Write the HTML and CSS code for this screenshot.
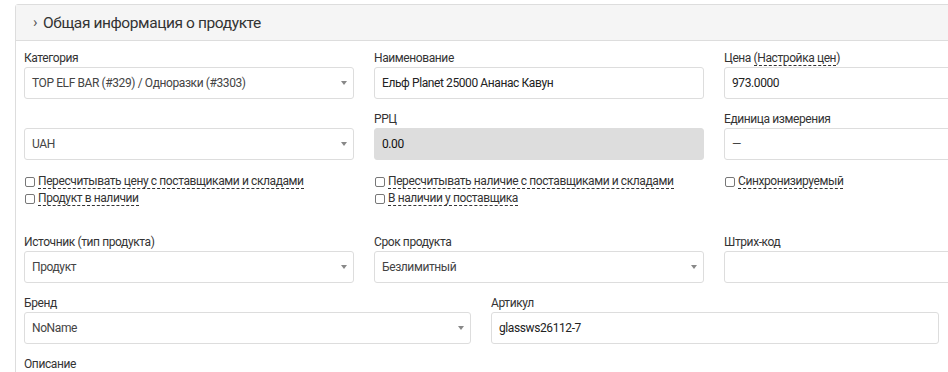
FILE: index.html
```html
<!DOCTYPE html>
<html lang="ru">
<head>
    <meta charset="UTF-8">
    <meta name="viewport" content="width=device-width, initial-scale=1.0">
    <title>Общая информация о продукте</title>
    <link rel="stylesheet" href="styles.css">
</head>
<body>
    <div class="panel">
        <div class="panel-heading">
            <span class="chevron">&rsaquo;</span>
            <span>Общая информация о продукте</span>
        </div>

        <div class="panel-body">
            <div class="row row-3">
                <div class="field">
                    <label>Категория</label>
                    <div class="control select">
                        <span>TOP ELF BAR (#329) / Одноразки (#3303)</span>
                        <b class="caret"></b>
                    </div>
                </div>
                <div class="field">
                    <label>Наименование</label>
                    <div class="control input">Ельф Planet 25000 Ананас Кавун</div>
                </div>
                <div class="field">
                    <label>Цена <span class="hint">(Настройка цен</span>)</label>
                    <div class="control input">973.0000</div>
                </div>
            </div>

            <div class="row row-3">
                <div class="field">
                    <label>&nbsp;</label>
                    <div class="control select">
                        <span>UAH</span>
                        <b class="caret"></b>
                    </div>
                </div>
                <div class="field">
                    <label>РРЦ</label>
                    <div class="control input disabled">0.00</div>
                </div>
                <div class="field">
                    <label>Единица измерения</label>
                    <div class="control select">
                        <span>—</span>
                    </div>
                </div>
            </div>

            <div class="row row-3 checks">
                <div class="check-group">
                    <label class="check"><i class="box"></i><span class="hint">Пересчитывать цену с поставщиками и складами</span></label>
                    <label class="check"><i class="box"></i><span class="hint">Продукт в наличии</span></label>
                </div>
                <div class="check-group">
                    <label class="check"><i class="box"></i><span class="hint">Пересчитывать наличие с поставщиками и складами</span></label>
                    <label class="check"><i class="box"></i><span class="hint">В наличии у поставщика</span></label>
                </div>
                <div class="check-group">
                    <label class="check"><i class="box"></i><span class="hint">Синхронизируемый</span></label>
                </div>
            </div>

            <div class="row row-3">
                <div class="field">
                    <label>Источник (тип продукта)</label>
                    <div class="control select">
                        <span>Продукт</span>
                        <b class="caret"></b>
                    </div>
                </div>
                <div class="field">
                    <label>Срок продукта</label>
                    <div class="control select">
                        <span>Безлимитный</span>
                        <b class="caret"></b>
                    </div>
                </div>
                <div class="field">
                    <label>Штрих-код</label>
                    <div class="control input"></div>
                </div>
            </div>

            <div class="row row-2">
                <div class="field">
                    <label>Бренд</label>
                    <div class="control select">
                        <span>NoName</span>
                        <b class="caret"></b>
                    </div>
                </div>
                <div class="field">
                    <label>Артикул</label>
                    <div class="control input">glassws26112-7</div>
                </div>
            </div>

            <div class="field">
                <label>Описание</label>
            </div>
        </div>
    </div>
</body>
</html>
```

FILE: styles.css
```css
body {
    font-family: Roboto, "Liberation Sans", Arial, sans-serif;
    margin: 0;
    padding: 4px 0 0 15px;
    background: #fff;
    color: #333;
    overflow: hidden;
    letter-spacing: -0.4px;
}
.panel {
    width: 1100px;
    border: 1px solid #ddd;
    border-radius: 3px;
    background: #fff;
}
.panel-heading {
    height: 35px;
    display: flex;
    align-items: center;
    gap: 6px;
    padding-left: 17px;
    background: #f5f5f5;
    border-bottom: 1px solid #ddd;
    font-size: 15.5px;
    color: #333;
}
.chevron {
    font-size: 15px;
    color: #555;
    margin-top: -2px;
}
.panel-body {
    padding: 10px 8px;
}
.row {
    display: grid;
    column-gap: 20px;
    margin-bottom: 13px;
}
.row-3 {
    grid-template-columns: 330px 330px 330px;
}
.row-2 {
    grid-template-columns: 447px 448px;
}
.field label {
    display: block;
    font-size: 12px;
    line-height: 15px;
    height: 16px;
    color: #333;
}
.control {
    box-sizing: border-box;
    height: 32px;
    border: 1px solid #ddd;
    border-radius: 3px;
    padding: 0 7px;
    display: flex;
    align-items: center;
    font-size: 12px;
    color: #222;
    background: #fff;
}
.select {
    justify-content: space-between;
    color: #444;
    padding-right: 6px;
}
.caret {
    width: 0;
    height: 0;
    border-top: 4px solid #888;
    border-left: 3px solid transparent;
    border-right: 3px solid transparent;
}
.disabled {
    background: #ddd;
    border-color: #ddd;
    color: #111;
}
.hint {
    border-bottom: 1px dashed #333;
}
.checks {
    margin-bottom: 28px;
}
.check {
    display: flex;
    align-items: center;
    height: 17px;
    font-size: 12px;
    color: #333;
}
.check .hint {
    line-height: 13px;
}
.box {
    box-sizing: border-box;
    width: 10px;
    height: 10px;
    border: 1px solid #777;
    border-radius: 2px;
    margin: 0 3px 0 1px;
    background: #fff;
}
```
